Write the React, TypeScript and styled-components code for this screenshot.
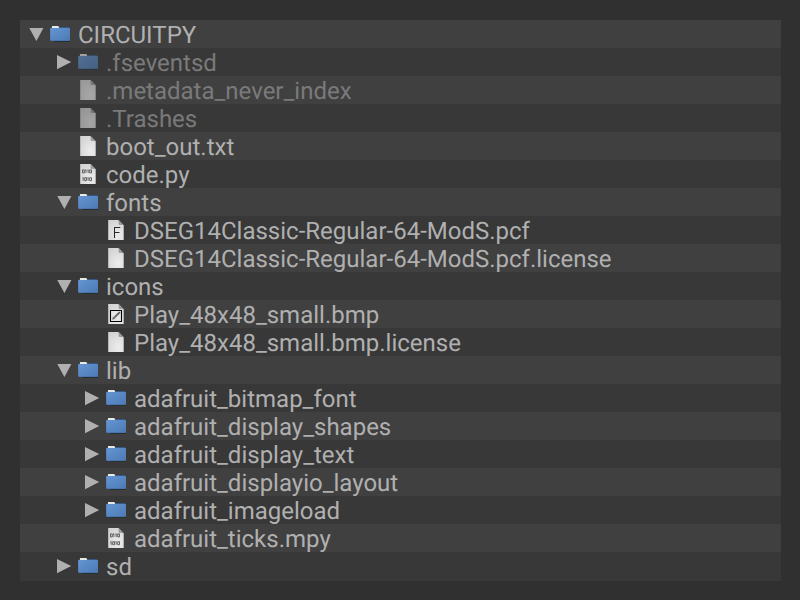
import React from 'react';
import styled, { createGlobalStyle } from 'styled-components';

const GlobalStyle = createGlobalStyle`
  body { margin: 0; background: #303030; }
`;
const Page = styled.main`
  box-sizing: border-box;
  width: 800px;
  height: 600px;
  padding: 20px 19px 19px 20px;
  background: #303030;
`;
const Tree = styled.div`
  display: flex;
  flex-direction: column;
`;
const Row = styled.div<{ $depth: number }>`
  display: flex;
  height: 28px;
  padding-left: ${(p) => 8 + p.$depth * 28}px;
  &:nth-child(odd) { background: #404040; }
  &:nth-child(even) { background: #383838; }
  &:last-child { height: 29px; }
`;
const ArrowSlot = styled.span`
  display: flex;
  flex: none;
  width: 22px;
  height: 28px;
`;
const IconSlot = styled.span<{ $dim?: boolean }>`
  display: flex;
  flex: none;
  width: 28px;
  height: 28px;
  opacity: ${(p) => (p.$dim ? 0.6 : 1)};
`;
const Name = styled.span<{ $dim?: boolean }>`
  font: 24px/28px Roboto, sans-serif;
  text-rendering: geometricPrecision;
  height: 28px;
  padding-top: 1px;
  color: ${(p) => (p.$dim ? '#7a7a7a' : '#b0b0b0')};
  white-space: pre;
`;
const Definitions = styled.svg`
  display: block;
`;

type Kind = 'folder' | 'file' | 'code' | 'font' | 'image';
type Item = [depth: number, name: string, kind: Kind, arrow?: 'open' | 'closed', dim?: boolean];

const items: Item[] = [
  [0, 'CIRCUITPY', 'folder', 'open'],
  [1, '.fseventsd', 'folder', 'closed', true],
  [1, '.metadata_never_index', 'file', undefined, true],
  [1, '.Trashes', 'file', undefined, true],
  [1, 'boot_out.txt', 'file'],
  [1, 'code.py', 'code'],
  [1, 'fonts', 'folder', 'open'],
  [2, 'DSEG14Classic-Regular-64-ModS.pcf', 'font'],
  [2, 'DSEG14Classic-Regular-64-ModS.pcf.license', 'file'],
  [1, 'icons', 'folder', 'open'],
  [2, 'Play_48x48_small.bmp', 'image'],
  [2, 'Play_48x48_small.bmp.license', 'file'],
  [1, 'lib', 'folder', 'open'],
  [2, 'adafruit_bitmap_font', 'folder', 'closed'],
  [2, 'adafruit_display_shapes', 'folder', 'closed'],
  [2, 'adafruit_display_text', 'folder', 'closed'],
  [2, 'adafruit_displayio_layout', 'folder', 'closed'],
  [2, 'adafruit_imageload', 'folder', 'closed'],
  [2, 'adafruit_ticks.mpy', 'code'],
  [1, 'sd', 'folder', 'closed'],
];

const Gradients = () => (
  <Definitions width="0" height="0">
    <defs>
      <linearGradient id="blue" x1="0" y1="0" x2="1" y2="1">
        <stop offset="0" stopColor="#6496d4" />
        <stop offset="1" stopColor="#4c79b2" />
      </linearGradient>
      <radialGradient id="paper" cx="0.65" cy="0.75" r="0.8">
        <stop offset="0" stopColor="#ededed" />
        <stop offset="1" stopColor="#d4d4d4" />
      </radialGradient>
    </defs>
  </Definitions>
);

const Folder = () => (
  <svg width="24" height="28" viewBox="0 0 24 28">
    <path d="M4 21h16v.9H5z" fill="#292b2e" />
    <path d="M1 10V7h18l.8 2z" fill="#345987" />
    <path d="M2 8V6h6.4l.8 2z" fill="#e8e8e4" />
    <path d="M.1 9q0-1 1-1h18q.9 0 .9.9V20q0 1-1 1H1.2q-1 0-1-1z" fill="url(#blue)" />
    <path d="M.7 20.6h18.8" stroke="#426d9f" strokeWidth=".6" />
  </svg>
);

const Sheet = ({ kind }: { kind: Kind }) => (
  <svg width="24" height="28" viewBox="0 0 24 28">
    <path d="M2.2 4h10.3l5.2 5.3V24H2.2z" fill="url(#paper)" />
    <path d="M12.5 4l.3 4.7 4.9.6z" fill="#999" />
    {kind === 'code' && (
      <g fill="none" stroke="#3c3c3c" strokeWidth=".75">
        <path d="M4.5 9.9h1.8v3H4.5zM7.1 10.2l.8-.5V13M9.4 10.2l.8-.5V13M11.7 9.9h1.8v3h-1.8z" />
        <path d="M4.4 18l.8-.5v3.3M6.7 17.7h1.8v3H6.7zM9.4 18l.8-.5v3.3M11.7 17.7h1.8v3h-1.8z" />
      </g>
    )}
    {kind === 'font' && (
      <path d="M8.5 22V11.5h5.8M8.5 16.5h5" fill="none" stroke="#292929" strokeWidth="1.05" />
    )}
    {kind === 'image' && (
      <>
        <path d="M4.5 10.5h11v11h-11z" fill="#e6e6e6" stroke="#050505" strokeWidth="1.1" />
        <path d="M9 16.9l4.9-4.8" stroke="#606060" strokeWidth="1.9" />
        <path d="M6 19.8l.9-2.8 2-1.1 1.1 1.2-1.2 2z" fill="#777" />
      </>
    )}
  </svg>
);

export default function App() {
  return (
    <Page>
      <GlobalStyle />
      <Gradients />
      <Tree>
        {items.map(([depth, name, kind, arrow, dim]) => (
          <Row key={name} $depth={depth}>
            <ArrowSlot>
              {arrow && (
                <svg width="20" height="28" viewBox="0 0 20 28">
                  <path d={arrow === 'open' ? 'M1.3 8h14.1l-7 13z' : 'M1 7v14.2l14.2-7.1z'} fill="#b0b0b0" />
                </svg>
              )}
            </ArrowSlot>
            <IconSlot $dim={dim}>{kind === 'folder' ? <Folder /> : <Sheet kind={kind} />}</IconSlot>
            <Name $dim={dim}>{name}</Name>
          </Row>
        ))}
      </Tree>
    </Page>
  );
}
